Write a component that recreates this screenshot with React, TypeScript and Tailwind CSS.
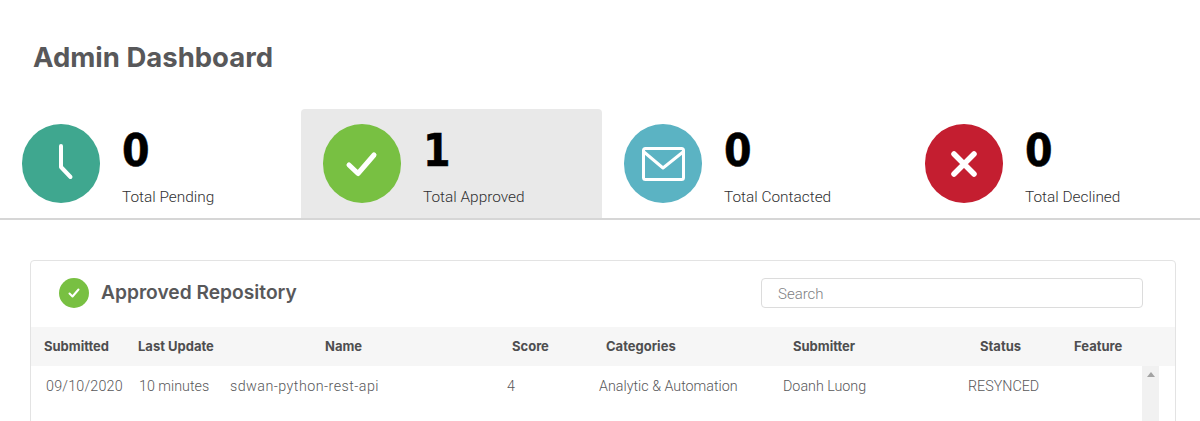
import { ReactNode } from 'react';

const font = "font-['Inter','Liberation_Sans',sans-serif]";
const rowGrid = 'grid grid-cols-[100px_93px_276px_90px_190px_180px_105px_1fr]';

function Stat({ color, value, label, active, icon }: { color: string; value: string; label: string; active?: boolean; icon: ReactNode }) {
  return (
    <div className={`w-[301px] shrink-0 h-[109px] pl-[22px] pt-[15px] flex gap-[22px] rounded-t ${active ? 'bg-[#e9e9e9]' : ''}`}>
      <div className={`w-[78px] h-[79px] rounded-full shrink-0 flex items-center justify-center ${color}`}>{icon}</div>
      <div>
        <div className="origin-left scale-x-90 font-['DejaVu_Sans',sans-serif] font-bold text-[44px] leading-[54px] text-black [-webkit-text-stroke:0.5px_black]">{value}</div>
        <div className="mt-[9px] font-['Roboto',sans-serif] text-[15.400px] leading-5 font-light text-[#2f2f31]">{label}</div>
      </div>
    </div>
  );
}

const stats = [
  {
    color: 'bg-[#3fa78f]',
    value: '0',
    label: 'Total Pending',
    icon: (
      <svg width="78" height="79" viewBox="0 0 78 79" fill="none" stroke="white" strokeWidth="4" strokeLinecap="round" strokeLinejoin="round">
        <path d="M39 22V43L48.500 53" />
      </svg>
    ),
  },
  {
    color: 'bg-[#78c042]',
    value: '1',
    label: 'Total Approved',
    active: true,
    icon: (
      <svg width="78" height="79" viewBox="0 0 78 79" fill="none" stroke="white" strokeWidth="5" strokeLinecap="round" strokeLinejoin="round">
        <path d="M26 41L35 49.500L51 31" />
      </svg>
    ),
  },
  {
    color: 'bg-[#5bb3c3]',
    value: '0',
    label: 'Total Contacted',
    icon: (
      <svg width="78" height="79" viewBox="0 0 78 79" fill="none" stroke="white" strokeWidth="3" strokeLinecap="round" strokeLinejoin="round">
        <rect x="19.500" y="24.500" width="40" height="31" rx="2" />
        <path d="M20 28L39 44L59 28" />
      </svg>
    ),
  },
  {
    color: 'bg-[#c41e30]',
    value: '0',
    label: 'Total Declined',
    icon: (
      <svg width="78" height="79" viewBox="0 0 78 79" fill="none" stroke="white" strokeWidth="5.500" strokeLinecap="round">
        <path d="M29 30L49 50M49 30L29 50" />
      </svg>
    ),
  },
];

const headers = [
  ['Submitted', 'pl-[13px]'],
  ['Last Update', 'pl-[7px]'],
  ['Name', 'pl-[101px]'],
  ['Score', 'pl-[12px]'],
  ['Categories', 'pl-[16px]'],
  ['Submitter', 'pl-[13px]'],
  ['Status', 'pl-[20px]'],
  ['Feature', 'pl-[9px]'],
];

const cells = [
  ['09/10/2020', 'pl-[15px] tracking-[0.2px]'],
  ['10 minutes', 'pl-[8px]'],
  ['sdwan-python-rest-api', 'pl-[6px] tracking-[0.45px]'],
  ['4', 'pl-[7px]'],
  ['Analytic & Automation', 'pl-[9px]'],
  ['Doanh Luong', 'pl-[3px]'],
  ['RESYNCED', 'pl-[8px]'],
];

export default function App() {
  return (
    <div className={`w-[1200px] h-[421px] overflow-hidden bg-white ${font}`}>
      <h1 className="pl-[33px] pt-[40px] h-[109px] text-[27.500px] leading-[34px] font-bold text-[#58585a]">Admin Dashboard</h1>
      <div className="flex border-b-2 border-[#d6d6d6] overflow-hidden">
        {stats.map(s => (
          <Stat key={s.label} {...s} />
        ))}
      </div>
      <div className="mt-[40px] ml-[30px] w-[1146px] h-[300px] border border-[#e3e3e3] rounded">
        <div className="h-[66px] pl-[28px] pr-[32px] flex justify-between pt-[17px]">
          <div className="flex items-start gap-3">
            <div className="w-[30px] h-[30px] rounded-full bg-[#78c042] flex items-center justify-center">
              <svg width="14" height="14" viewBox="0 0 14 14" fill="none" stroke="white" strokeWidth="2" strokeLinecap="round" strokeLinejoin="round">
                <path d="M2.500 7.500L5.500 10.500L11.500 3.500" />
              </svg>
            </div>
            <div className="text-[19.200px] leading-[28px] font-semibold text-[#58585a]">Approved Repository</div>
          </div>
          <input
            placeholder="Search"
            className="w-[382px] h-[30px] border border-[#dcdcdc] rounded pl-4 pt-px font-['Roboto',sans-serif] text-[15px] font-light outline-none placeholder:text-[#808083]"
          />
        </div>
        <div className={`${rowGrid} h-[39px] items-center bg-[#f6f6f6] text-[13px] font-bold text-[#4e4e50]`}>
          {headers.map(([text, pad]) => (
            <div key={text} className={pad}>{text}</div>
          ))}
        </div>
        <div className="relative">
          <div className={`${rowGrid} h-[42px] items-center font-['Roboto',sans-serif] text-[14.300px] font-light text-[#58585a]`}>
            {cells.map(([text, pad]) => (
              <div key={text} className={pad}>{text}</div>
            ))}
          </div>
          <div className="absolute left-[1111px] top-0 w-[17px] h-[100px] bg-[#f1f1f1] flex justify-center pt-[6px]">
            <div className="w-0 h-0 border-x-4 border-x-transparent border-b-[5px] border-b-[#a3a3a3]" />
          </div>
        </div>
      </div>
    </div>
  );
}
